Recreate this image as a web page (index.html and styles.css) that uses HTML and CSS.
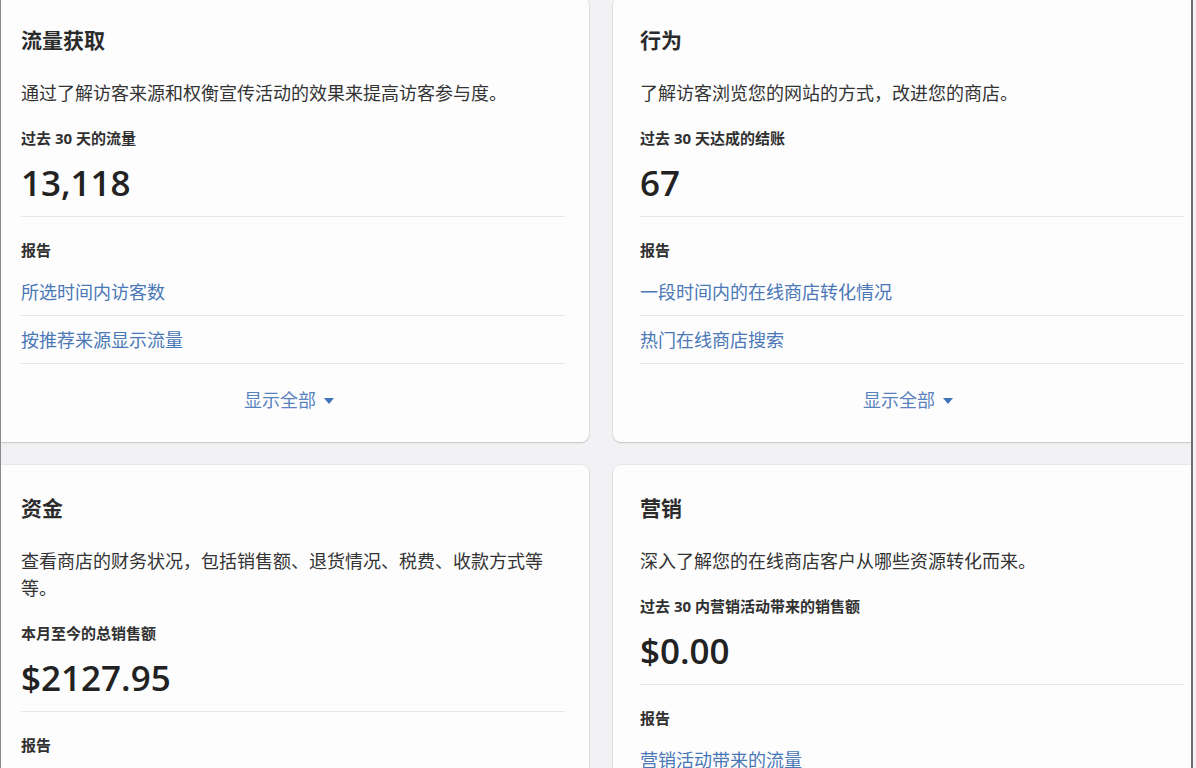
FILE: index.html
```html
<!DOCTYPE html>
<html lang="zh-CN">
<head>
<meta charset="utf-8">
<title>分析</title>
<link rel="stylesheet" href="styles.css">
</head>
<body>
<div class="frame">
  <div class="grid">
    <section class="card">
      <h2 class="card-title">流量获取</h2>
      <p class="card-desc">通过了解访客来源和权衡宣传活动的效果来提高访客参与度。</p>
      <div class="metric-label">过去 30 天的流量</div>
      <div class="metric-value">13,118</div>
      <hr class="divider">
      <div class="section-label">报告</div>
      <ul class="links">
        <li class="link-row"><a class="link">所选时间内访客数</a></li>
        <li class="link-row"><a class="link">按推荐来源显示流量</a></li>
      </ul>
      <div class="show-all"><span class="show-all-text">显示全部</span><svg class="caret" viewBox="0 0 10 6" width="10" height="6"><path d="M0 0 L10 0 L5 6 Z"/></svg></div>
    </section>
    <section class="card">
      <h2 class="card-title">行为</h2>
      <p class="card-desc">了解访客浏览您的网站的方式，改进您的商店。</p>
      <div class="metric-label">过去 30 天达成的结账</div>
      <div class="metric-value">67</div>
      <hr class="divider">
      <div class="section-label">报告</div>
      <ul class="links">
        <li class="link-row"><a class="link">一段时间内的在线商店转化情况</a></li>
        <li class="link-row"><a class="link">热门在线商店搜索</a></li>
      </ul>
      <div class="show-all"><span class="show-all-text">显示全部</span><svg class="caret" viewBox="0 0 10 6" width="10" height="6"><path d="M0 0 L10 0 L5 6 Z"/></svg></div>
    </section>
    <section class="card">
      <h2 class="card-title">资金</h2>
      <p class="card-desc">查看商店的财务状况，包括销售额、退货情况、税费、收款方式等等。</p>
      <div class="metric-label">本月至今的总销售额</div>
      <div class="metric-value">$2127.95</div>
      <hr class="divider">
      <div class="section-label">报告</div>
    </section>
    <section class="card">
      <h2 class="card-title">营销</h2>
      <p class="card-desc">深入了解您的在线商店客户从哪些资源转化而来。</p>
      <div class="metric-label">过去 30 内营销活动带来的销售额</div>
      <div class="metric-value">$0.00</div>
      <hr class="divider">
      <div class="section-label">报告</div>
      <ul class="links">
        <li class="link-row"><a class="link">营销活动带来的流量</a></li>
      </ul>
    </section>
  </div>
</div>
</body>
</html>
```
FILE: styles.css
```css
html, body {
  margin: 0;
  padding: 0;
  height: 768px;
  overflow: hidden;
  background: #f3f3f5;
}

body {
  font-family: "Open Sans", "Noto Sans CJK SC", sans-serif;
  color: #2f2f2f;
}

.frame {
  width: 1190px;
  height: 768px;
  overflow: hidden;
  border-left: 1px solid #8a8a8c;
  border-right: 2px solid #6e6e70;
  background: #f2f2f4;
}

.grid {
  display: grid;
  grid-template-columns: 595px 595px;
  column-gap: 24px;
  row-gap: 23px;
  margin-left: -7px;
  margin-top: -3px;
}

.card {
  background: #fdfdfe;
  border-radius: 8px;
  box-shadow: 0 1px 2px rgba(0, 0, 0, 0.16), 0 0 0 1px rgba(0, 0, 0, 0.035);
  padding: 29px 24px 0 27px;
}

.card-title {
  margin: 0;
  font-size: 21px;
  line-height: 28px;
  font-weight: 700;
  color: #2b2b2b;
}

.card-desc {
  margin: 26px 0 0;
  font-size: 18px;
  line-height: 27px;
  color: #333;
  max-width: 540px;
}

.metric-label {
  margin-top: 21px;
  font-size: 15px;
  line-height: 20px;
  font-weight: 700;
  color: #303030;
}

.metric-value {
  margin-top: 13px;
  font-size: 35px;
  line-height: 44px;
  font-weight: 600;
  color: #222;
}

.divider {
  margin: 11px 0 0;
  border: 0;
  border-top: 1px solid #e7e7ea;
  height: 0;
}

.section-label {
  margin-top: 23px;
  font-size: 15px;
  line-height: 20px;
  font-weight: 700;
  color: #303030;
}

.links {
  list-style: none;
  margin: 8px 0 0;
  padding: 0;
}

.link-row {
  height: 47px;
  display: flex;
  align-items: center;
  border-bottom: 1px solid #e7e7ea;
}

.link {
  font-size: 18px;
  line-height: 24px;
  color: #4a78b6;
}

.show-all {
  display: flex;
  justify-content: center;
  align-items: center;
  gap: 8px;
  padding: 26px 8px 32px 0;
  height: 20px;
}

.show-all-text {
  font-size: 18px;
  line-height: 20px;
  color: #5883bc;
}

.caret {
  fill: #3f74b8;
  margin-top: 1px;
}
```
